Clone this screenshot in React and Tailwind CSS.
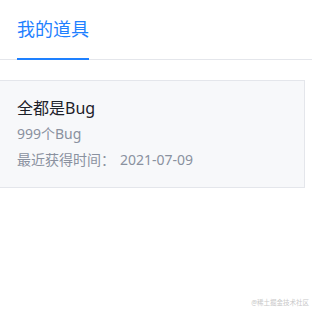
export default function App() {
  return (
    <div
      className="relative w-[312px] h-[312px] bg-white overflow-hidden"
      style={{ fontFamily: '"Noto Sans", "Noto Sans CJK SC", sans-serif' }}
    >
      <div className="h-[60px] border-b border-[#e4e6eb] flex">
        <div className="relative ml-[17px] w-[72px] h-full flex items-center">
          <span className="text-[18px] leading-[24px] text-[#1e80ff] mt-[-2px]">我的道具</span>
          <div className="absolute left-0 right-0 bottom-[-1px] h-[2px] bg-[#1e80ff]" />
        </div>
      </div>
      <div className="mt-[20px] mr-[7px] h-[108px] bg-[#f7f8fa] border border-l-0 border-[#e4e6eb] pl-[17px] pt-[15px]">
        <div className="text-[16px] leading-[24px] text-[#1d2129]">全都是Bug</div>
        <div className="mt-[3px] text-[14px] leading-[22px] text-[#8a919f]">999个Bug</div>
        <div className="mt-[4px] text-[14px] leading-[22px] text-[#8a919f]">
          最近获得时间：<span className="ml-[5px]">2021-07-09</span>
        </div>
      </div>
      <div className="absolute right-[3px] bottom-[5px] text-[6.5px] leading-[8px] text-[#c8c8c8]">
        @稀土掘金技术社区
      </div>
    </div>
  );
}
